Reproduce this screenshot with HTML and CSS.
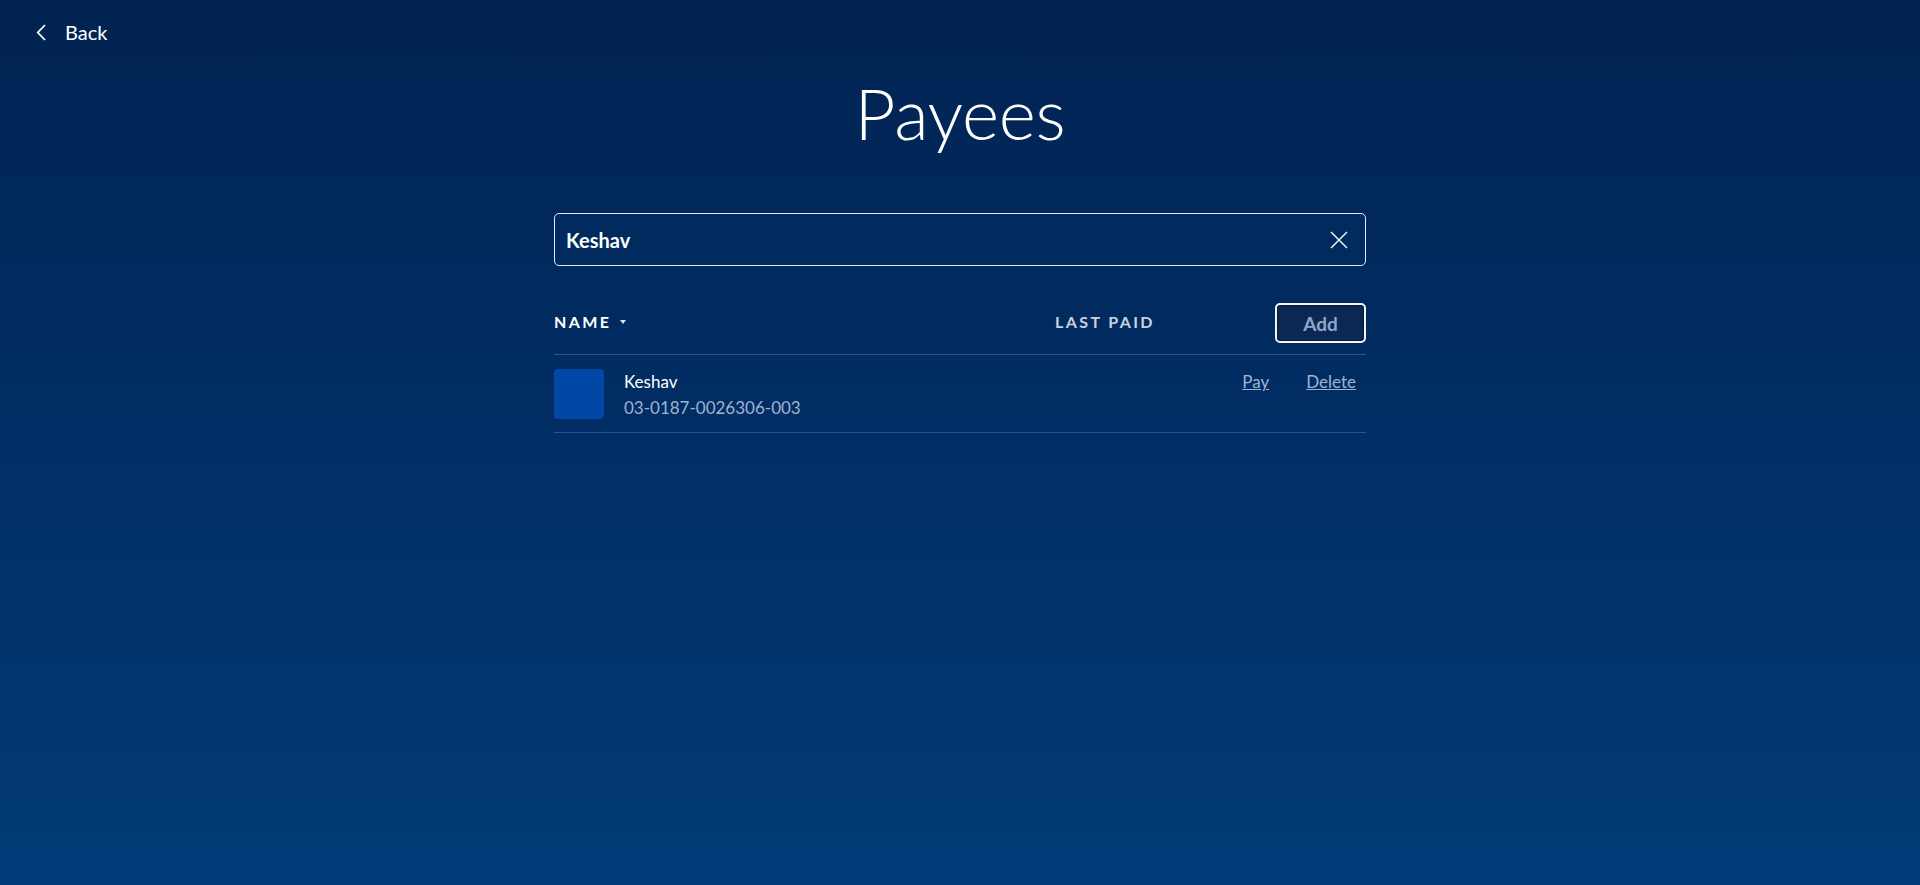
FILE: index.html
```html
<!DOCTYPE html>
<html lang="en">
<head>
<meta charset="utf-8">
<title>Payees</title>
<link rel="stylesheet" href="styles.css">
</head>
<body>
<div class="page">
  <header class="topbar">
    <a class="back" href="#">
      <svg class="back-icon" width="13" height="17" viewBox="0 0 13 17" aria-hidden="true"><path d="M10 1 L2.8 8.5 L10 16" fill="none" stroke="#fff" stroke-width="1.8"/></svg>
      <span>Back</span>
    </a>
  </header>
  <main class="container">
    <h1 class="title">Payees</h1>
    <div class="search">
      <span class="search-text">Keshav</span>
      <svg class="clear-icon" width="20" height="20" viewBox="0 0 20 20" aria-hidden="true"><path d="M2 2 L18 18 M18 2 L2 18" stroke="#fff" stroke-width="1.4"/></svg>
    </div>
    <div class="table-head">
      <div class="col-name">NAME <span class="caret"></span></div>
      <div class="col-paid">LAST PAID</div>
      <button class="add-btn">Add</button>
    </div>
    <div class="payee-row">
      <div class="avatar"></div>
      <div class="payee-info">
        <div class="payee-name">Keshav</div>
        <div class="payee-acct">03-0187-0026306-003</div>
      </div>
      <div class="payee-actions">
        <a href="#" class="action">Pay</a>
        <a href="#" class="action">Delete</a>
      </div>
    </div>
  </main>
</div>
</body>
</html>
```
FILE: styles.css
```css
html, body {
  margin: 0;
  padding: 0;
}
body {
  font-family: Lato, "Liberation Sans", sans-serif;
  color: #fff;
  background: linear-gradient(180deg, #012352 0%, #012d63 45%, #023c78 100%);
  min-height: 885px;
}
.page {
  min-height: 885px;
}
.topbar {
  padding: 20px 0 0 35px;
  height: 44px;
}
.back {
  display: inline-flex;
  align-items: center;
  gap: 17px;
  color: #fff;
  text-decoration: none;
  font-size: 20px;
  line-height: 24px;
}
.back-icon {
  display: block;
}
.container {
  width: 812px;
  margin: 0 auto;
}
.title {
  margin: 7px 0 0;
  text-align: center;
  font-weight: 300;
  font-size: 71px;
  line-height: 84px;
  letter-spacing: -0.3px;
}
.search {
  margin-top: 58px;
  height: 51px;
  border: 1px solid #e6ebf3;
  border-radius: 5px;
  display: flex;
  align-items: center;
  justify-content: space-between;
  padding: 0 16px 0 11px;
  background: #012a5f;
}
.search-text {
  font-weight: 700;
  font-size: 20px;
}
.table-head {
  margin-top: 37px;
  display: grid;
  grid-template-columns: 1fr 220px 91px;
  align-items: center;
  padding-bottom: 11px;
  border-bottom: 1px solid #2e5289;
}
.col-name, .col-paid {
  font-weight: 700;
  font-size: 16px;
  letter-spacing: 2.4px;
  margin-top: -4px;
}
.col-name {
  color: #fff;
  display: flex;
  align-items: center;
}
.col-paid {
  color: #c9d2df;
}
.caret {
  display: inline-block;
  width: 0;
  height: 0;
  margin-left: 9px;
  margin-top: 2px;
  border-left: 3.5px solid transparent;
  border-right: 3.5px solid transparent;
  border-top: 4px solid #dfe5ee;
}
.add-btn {
  height: 40px;
  width: 91px;
  border: 2px solid #f2f4f8;
  border-radius: 5px;
  box-shadow: inset 0 0 0 1px #0a1a33;
  background: #0b2756;
  color: #8ea6c9;
  font-family: Lato, "Liberation Sans", sans-serif;
  font-weight: 700;
  font-size: 19px;
  padding: 0;
}
.payee-row {
  display: flex;
  align-items: flex-start;
  padding: 14px 0 13px;
  border-bottom: 1px solid #2e5289;
}
.avatar {
  width: 50px;
  height: 50px;
  border-radius: 4px;
  background: #0047a6;
  flex: none;
}
.payee-info {
  margin-left: 20px;
  margin-top: 2px;
  flex: 1;
}
.payee-name {
  font-size: 17px;
  line-height: 21px;
  color: #fff;
}
.payee-acct {
  margin-top: 5px;
  font-size: 17px;
  line-height: 22px;
  color: #9fb3d3;
}
.payee-actions {
  display: flex;
  gap: 37px;
  margin-top: 2px;
  margin-right: 10px;
}
.action {
  font-size: 17px;
  line-height: 22px;
  color: #9fb3d3;
  text-decoration: underline;
}
```
